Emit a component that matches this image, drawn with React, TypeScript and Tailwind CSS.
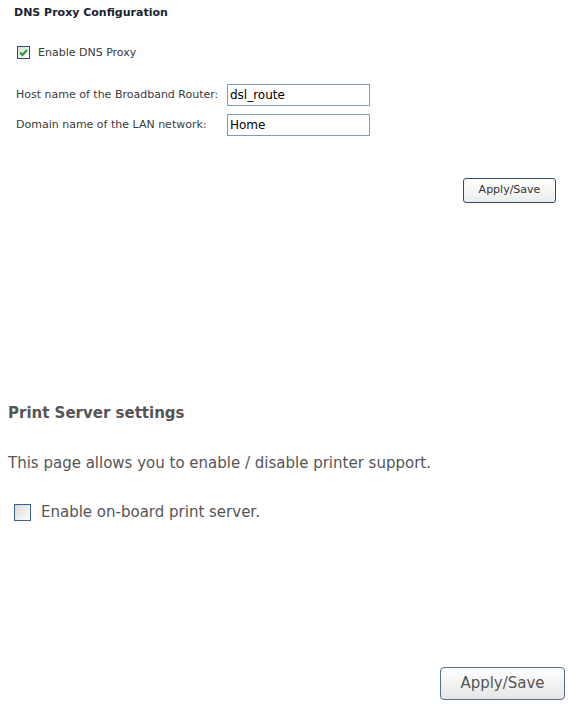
import { useState } from "react";

function Check({ checked, onToggle, size }: { checked: boolean; onToggle: () => void; size: "sm" | "lg" }) {
  return (
    <span
      role="checkbox"
      aria-checked={checked}
      onClick={onToggle}
      className={
        size === "sm"
          ? "flex h-[13px] w-[13px] shrink-0 items-center justify-center border border-[#1c5180] bg-gradient-to-br from-[#dcdcd7] to-white"
          : "flex h-[17px] w-[17px] shrink-0 items-center justify-center border border-[#3a6490] bg-gradient-to-br from-[#d8d8d4] to-white"
      }
    >
      {checked && (
        <svg width="9" height="9" viewBox="0 0 9 9">
          <path d="M1 4.5 L3.5 7 L8 2" fill="none" stroke="#21a121" strokeWidth="2" />
        </svg>
      )}
    </span>
  );
}

function ApplyButton({ big }: { big?: boolean }) {
  return (
    <button
      type="button"
      className={
        big
          ? "h-[33px] w-[125px] rounded-[4px] border border-[#4f6f93] bg-gradient-to-b from-white to-[#e6e6e6] text-[15px] text-[#555]"
          : "h-[25px] w-[93px] rounded-[3px] border border-[#2d4d73] bg-gradient-to-b from-white to-[#ececec] text-[11px] text-[#333]"
      }
    >
      Apply/Save
    </button>
  );
}

export default function App() {
  const [dns, setDns] = useState(true);
  const [host, setHost] = useState("dsl_route");
  const [domain, setDomain] = useState("Home");
  const [print, setPrint] = useState(false);

  return (
    <div className="h-[706px] w-[568px] overflow-hidden bg-white font-['DejaVu_Sans',sans-serif]">
      {/* DNS proxy */}
      <div className="pl-[14px] pt-[6px] text-[11px] text-[#3a3a3a]">
        <h2 className="text-[11px] font-bold leading-[14px] text-[#1a2233]">DNS Proxy Configuration</h2>
        <label className="mt-[26px] flex items-center gap-[8px] pl-[3px] leading-[13px]">
          <Check checked={dns} onToggle={() => setDns(!dns)} size="sm" />
          <span>Enable DNS Proxy</span>
        </label>

        <div className="mt-[25px] flex flex-col gap-[8px] pl-[2px]">
          <div className="flex items-center">
            <span className="w-[211px] whitespace-nowrap">Host name of the Broadband Router:</span>
            <input
              value={host}
              onChange={(e) => setHost(e.target.value)}
              className="h-[22px] w-[143px] border border-[#7f9db9] px-[2px] text-[12px] text-black outline-none"
            />
          </div>
          <div className="flex items-center">
            <span className="w-[211px] whitespace-nowrap">Domain name of the LAN network:</span>
            <input
              value={domain}
              onChange={(e) => setDomain(e.target.value)}
              className="h-[22px] w-[143px] border border-[#7f9db9] px-[2px] text-[12px] text-black outline-none"
            />
          </div>
        </div>

        <div className="mt-[42px] flex justify-end pr-[12px]">
          <ApplyButton />
        </div>
      </div>

      {/* Print server */}
      <div className="mt-[199px] pl-[8px] text-[#555]">
        <h2 className="text-[15px] font-bold leading-[22px]">Print Server settings</h2>
        <p className="mt-[29px] text-[15px] leading-[20px]">
          This page allows you to enable / disable printer support.
        </p>
        <label className="mt-[31px] flex items-center gap-[10px] pl-[6px] leading-[17px]">
          <Check checked={print} onToggle={() => setPrint(!print)} size="lg" />
          <span className="text-[15px]">Enable on-board print server.</span>
        </label>
        <div className="mt-[146px] flex justify-end pr-[3px]">
          <ApplyButton big />
        </div>
      </div>
    </div>
  );
}
